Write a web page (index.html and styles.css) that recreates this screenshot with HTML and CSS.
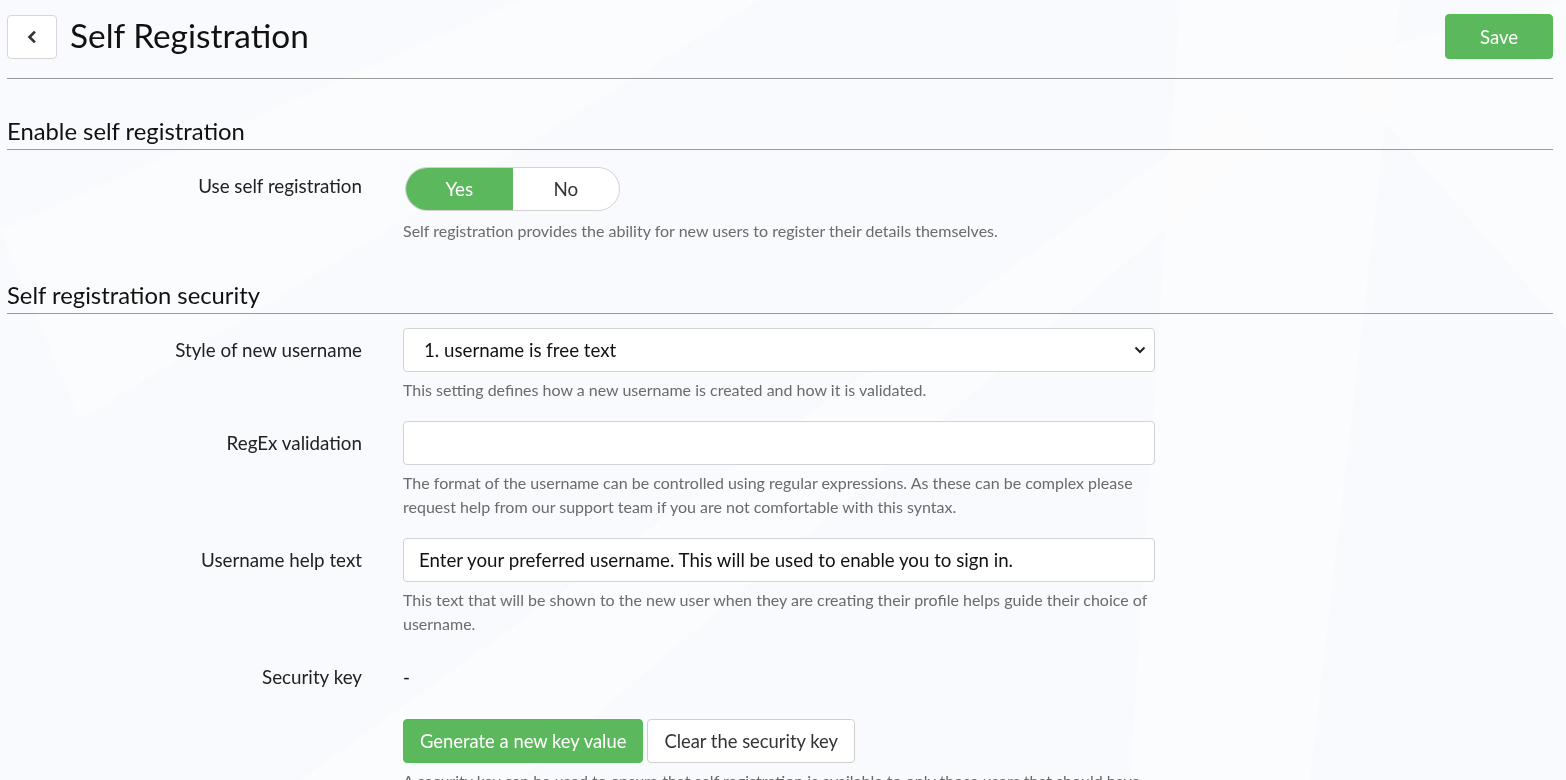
FILE: index.html
```html
<!DOCTYPE html>
<html lang="en">
<head>
<meta charset="utf-8"/>
<meta content="width=device-width, initial-scale=1.0" name="viewport"/>
<title>Self Registration</title>
<link rel="stylesheet" href="styles.css">
</head>
<body>
<svg class="backdrop" viewBox="0 0 1566 780" preserveAspectRatio="none" aria-hidden="true">
  <polygon points="1330,60 1566,0 1566,330" />
  <polygon points="1180,0 1400,0 1310,780 1130,780" />
  <polygon points="0,230 520,0 760,0 80,420" />
  <polygon points="300,780 1230,110 1270,140 520,780" />
</svg>

<div class="page">
  <header class="topbar">
    <button class="back" type="button" aria-label="Back">
      <svg width="14" height="14" viewBox="0 0 14 14"><path d="M9 2.5 L4.5 7 L9 11.5" fill="none" stroke="#333" stroke-width="2.6" stroke-linecap="square"/></svg>
    </button>
    <h1>Self Registration</h1>
    <button class="btn btn-green save" type="button">Save</button>
  </header>

  <section>
    <h2 class="section-title">Enable self registration</h2>
    <div class="row">
      <label class="label">Use self registration</label>
      <div class="control">
        <div class="toggle">
          <span class="toggle-opt on">Yes</span>
          <span class="toggle-opt">No</span>
        </div>
        <p class="help">Self registration provides the ability for new users to register their details themselves.</p>
      </div>
    </div>
  </section>

  <section>
    <h2 class="section-title">Self registration security</h2>
    <div class="row">
      <label class="label" for="style">Style of new username</label>
      <div class="control">
        <div class="select-wrap">
          <select id="style" class="field">
            <option>1. username is free text</option>
            <option>2. username is an email address</option>
          </select>
          <svg class="chevron" width="12" height="8" viewBox="0 0 12 8"><path d="M1.5 1.5 L6 6 L10.5 1.5" fill="none" stroke="#222" stroke-width="2"/></svg>
        </div>
        <p class="help">This setting defines how a new username is created and how it is validated.</p>
      </div>
    </div>

    <div class="row">
      <label class="label" for="regex">RegEx validation</label>
      <div class="control">
        <input id="regex" class="field" type="text" value="">
        <p class="help">The format of the username can be controlled using regular expressions. As these can be complex please request help from our support team if you are not comfortable with this syntax.</p>
      </div>
    </div>

    <div class="row">
      <label class="label" for="helptext">Username help text</label>
      <div class="control">
        <input id="helptext" class="field" type="text" value="Enter your preferred username. This will be used to enable you to sign in.">
        <p class="help">This text that will be shown to the new user when they are creating their profile helps guide their choice of username.</p>
      </div>
    </div>

    <div class="row">
      <label class="label">Security key</label>
      <div class="control">
        <div class="key-value">-</div>
        <div class="actions">
          <button class="btn btn-green" type="button">Generate a new key value</button>
          <button class="btn btn-white" type="button">Clear the security key</button>
        </div>
        <p class="help">A security key can be used to ensure that self registration is available to only those users that should have access.</p>
      </div>
    </div>
  </section>
</div>
</body>
</html>
```

FILE: styles.css
```css
body {
  margin: 0;
  font-family: Lato, "Open Sans", sans-serif;
  background: #f9fafd;
  color: #222;
  overflow: hidden;
}
.backdrop {
  position: fixed;
  left: 0;
  top: 0;
  width: 100%;
  height: 100%;
  z-index: -1;
}
.backdrop polygon {
  fill: #fdfdfe;
  opacity: 0.5;
}
.page {
  margin: 0 13px 0 7px;
}
.topbar {
  display: flex;
  align-items: center;
  padding: 14px 0 19px;
  border-bottom: 1px solid #9a9a9a;
}
.topbar h1 {
  flex: 1;
  margin: 0 0 0 13px;
  padding-bottom: 3px;
  font-size: 33.4px;
  line-height: 40px;
  font-weight: normal;
  color: #111;
}
.back {
  width: 50px;
  height: 44px;
  display: flex;
  align-items: center;
  justify-content: center;
  background: #fff;
  border: 1px solid #d6d6d6;
  border-radius: 4px;
  padding: 0;
  cursor: pointer;
}
.btn {
  height: 44px;
  padding: 0 15px;
  font-family: inherit;
  font-size: 18.6px;
  border-radius: 4px;
  cursor: pointer;
}
.btn-green {
  background: #5cb85c;
  border: 1px solid #54bd54;
  color: #fff;
}
.btn-white {
  background: #fff;
  border: 1px solid #cfcfcf;
  color: #333;
}
.save {
  width: 108px;
  height: 45px;
}
.section-title {
  margin: 39px 0 0;
  padding-bottom: 5px;
  font-size: 23.8px;
  line-height: 26px;
  font-weight: normal;
  color: #111;
  border-bottom: 1px solid #9a9a9a;
}
section .row:first-of-type {
  margin-top: 14px;
}
.row {
  display: grid;
  grid-template-columns: 355px 752px;
  column-gap: 41px;
}
.row + .row {
  margin-top: 19px;
}
.label {
  text-align: right;
  font-size: 18.8px;
  line-height: 44px;
  color: #222;
}
.toggle {
  display: flex;
  width: 215px;
  height: 44px;
  margin: 3px 0 0 2px;
  border: 1px solid #d2d2d2;
  border-radius: 23px;
  overflow: hidden;
  background: #fff;
  box-sizing: border-box;
}
.toggle-opt {
  flex: 1;
  text-align: center;
  line-height: 42px;
  font-size: 18.8px;
  color: #333;
}
.toggle-opt.on {
  background: #5cb85c;
  color: #fff;
}
.help {
  margin: 6px 0 0;
  font-size: 16px;
  line-height: 24px;
  color: #6b6b6b;
}
.toggle + .help {
  margin-top: 8px;
}
.field {
  display: block;
  width: 100%;
  height: 44px;
  box-sizing: border-box;
  border: 1px solid #ced3da;
  border-radius: 4px;
  background: #fff;
  font-family: inherit;
  font-size: 18.7px;
  color: #111;
  padding: 0 15px;
}
.select-wrap {
  position: relative;
}
select.field {
  appearance: none;
  padding-left: 20px;
}
.chevron {
  position: absolute;
  right: 9px;
  top: 18px;
  pointer-events: none;
}
.key-value {
  font-size: 18.8px;
  line-height: 44px;
  color: #111;
}
.actions {
  display: flex;
  gap: 4px;
  margin-top: 20px;
}
.actions .btn {
  padding: 0 16px;
  font-size: 18.4px;
}
```
